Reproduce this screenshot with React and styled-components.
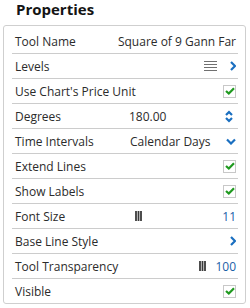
import React from 'react'
import styled, { createGlobalStyle } from 'styled-components'

const Global = createGlobalStyle`
  body {
    margin: 0;
    background: #fff;
    font-family: 'Open Sans', 'Liberation Sans', sans-serif;
  }
`
const Page = styled.div`
  width: 250px;
  height: 308px;
  padding: 0 4px 0 3px;
  box-sizing: border-box;
`
const Heading = styled.h1`
  margin: 0;
  padding: 0 0 0 13px;
  height: 25px;
  line-height: 19px;
  font-size: 15px;
  font-weight: 700;
  color: #141414;
`
const Panel = styled.div`
  border: 1px solid #cfcfcf;
  border-radius: 3px;
  padding: 3px 7px 0 8px;
`
const Row = styled.div`
  display: flex;
  align-items: center;
  height: 24px;
  padding: 0 2px 0 3px;
  font-size: 12px;
  color: #2b2b2b;
  border-bottom: ${(p) => (p.last ? 'none' : '1px solid #cccccc')};
`
const Label = styled.span`
  flex: 1;
  white-space: nowrap;
`
const Middle = styled.span`
  width: ${(p) => p.w}px;
  white-space: nowrap;
`
const Value = styled.span`
  color: ${(p) => (p.blue ? '#1b5fa8' : '#2b2b2b')};
  white-space: nowrap;
`
const Check = styled.span`
  width: 11px;
  height: 11px;
  border: 1px solid #c8c8c8;
  display: flex;
  align-items: center;
  justify-content: center;
`
const Icon = styled.svg`
  display: block;
  margin-left: ${(p) => p.ml || 0}px;
`

const Chevron = ({ ml }) => (
  <Icon ml={ml} width="6" height="10" viewBox="0 0 6 10">
    <path d="M1 1 L5 5 L1 9" fill="none" stroke="#1a6fc0" strokeWidth="2.2" />
  </Icon>
)
const ChevronDown = ({ ml }) => (
  <Icon ml={ml} width="10" height="7" viewBox="0 0 10 7">
    <path d="M1 1.5 L5 5.5 L9 1.5" fill="none" stroke="#1a6fc0" strokeWidth="2.2" />
  </Icon>
)
const Spinner = () => (
  <Icon ml={0} width="8" height="13" viewBox="0 0 8 13" style={{ marginRight: 3 }}>
    <path d="M1 5 L4 2 L7 5" fill="none" stroke="#1a6fc0" strokeWidth="2.2" />
    <path d="M1 8 L4 11 L7 8" fill="none" stroke="#1a6fc0" strokeWidth="2.2" />
  </Icon>
)
const Lines = () => (
  <Icon width="13" height="10" viewBox="0 0 13 10">
    {[0.5, 3.5, 6.5, 9.5].map((y) => (
      <line key={y} x1="0" x2="13" y1={y} y2={y} stroke="#707070" strokeWidth="1" />
    ))}
  </Icon>
)
const Grip = () => (
  <Icon width="7" height="10" viewBox="0 0 7 10">
    {[1, 3.5, 6].map((x) => (
      <line key={x} x1={x} x2={x} y1="0" y2="10" stroke="#3a3a3a" strokeWidth="1.8" />
    ))}
  </Icon>
)
const Box = () => (
  <Check>
    <svg width="10" height="8" viewBox="0 0 10 8">
      <path d="M1 4 L3.8 6.5 L9 1.2" fill="none" stroke="#1f9a1f" strokeWidth="2.2" />
    </svg>
  </Check>
)

export default function App() {
  return (
    <Page>
      <Global />
      <Heading>Properties</Heading>
      <Panel>
        <Row>
          <Label>Tool Name</Label>
          <Value>Square of 9 Gann Far</Value>
        </Row>
        <Row>
          <Label>Levels</Label>
          <Lines />
          <Chevron ml={13} />
        </Row>
        <Row>
          <Label>Use Chart's Price Unit</Label>
          <Box />
        </Row>
        <Row>
          <Label>Degrees</Label>
          <Middle w={96}>180.00</Middle>
          <Spinner />
        </Row>
        <Row>
          <Label>Time Intervals</Label>
          <Middle w={96}>Calendar Days</Middle>
          <ChevronDown />
        </Row>
        <Row>
          <Label>Extend Lines</Label>
          <Box />
        </Row>
        <Row>
          <Label>Show Labels</Label>
          <Box />
        </Row>
        <Row>
          <Label>Font Size</Label>
          <Grip />
          <Middle w={80} />
          <Value blue>11</Value>
        </Row>
        <Row>
          <Label>Base Line Style</Label>
          <Chevron />
        </Row>
        <Row>
          <Label>Tool Transparency</Label>
          <Grip />
          <Middle w={9} />
          <Value blue>100</Value>
        </Row>
        <Row last>
          <Label>Visible</Label>
          <Box />
        </Row>
      </Panel>
    </Page>
  )
}
